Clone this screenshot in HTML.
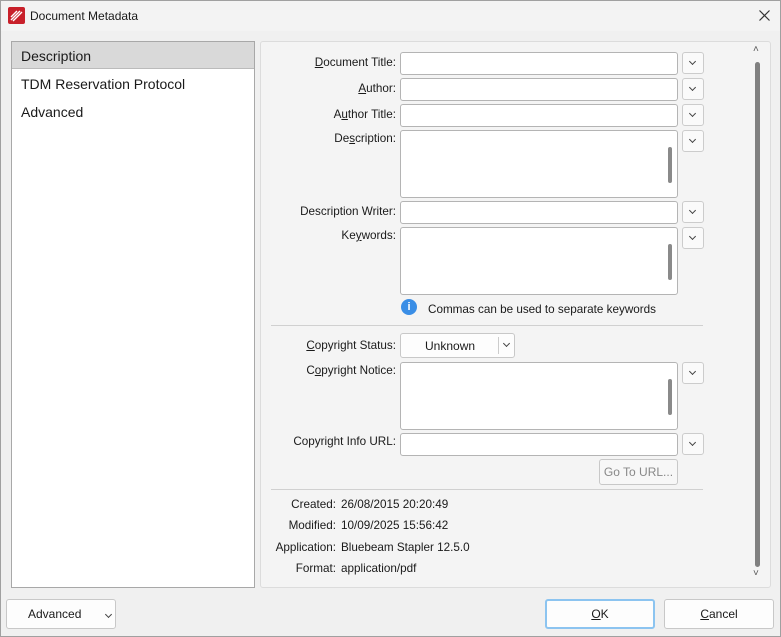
<!DOCTYPE html>
<html><head><style>
*{margin:0;padding:0;box-sizing:border-box}
body{width:781px;height:637px;background:#f0f0f0;font-family:"Liberation Sans",sans-serif;font-size:11.7px;color:#1a1a1a;position:relative;overflow:hidden;box-shadow:inset 0 0 0 1px #a0a0a0}
.a{position:absolute}
.in{position:absolute;background:#fff;border:1px solid #b4b4b4;border-radius:3px;left:400px;width:278px}
.dd{position:absolute;left:682px;width:22px;height:22px;background:#fafafa;border:1px solid #ccc;border-radius:3px}
.dd:after,.chev:after{content:"";position:absolute;left:7px;top:6px;width:4px;height:4px;border-right:1.5px solid #444;border-bottom:1.5px solid #444;transform:rotate(45deg)}
.lb{position:absolute;right:385px;text-align:right;white-space:nowrap}
.sb{position:absolute;right:5px;width:4px;background:#8a8a8a;border-radius:2px}
.btn{position:absolute;background:#fdfdfd;border:1px solid #c8c8c8;border-radius:3px;text-align:center;font-size:12px}
u{text-decoration:underline}
</style></head><body>
<div class="a" style="left:1px;top:1px;width:779px;height:30px;background:#f3f3f3"></div>
<svg class="a" style="left:8px;top:7px" width="17" height="17"><rect width="17" height="17" rx="2" fill="#c8202a"/><path d="M3 13 L12 4 M5 14 L14 5 M3 10 L9 4" stroke="#fff" stroke-width="1.4"/></svg>
<div class="a" style="left:30px;top:9px;font-size:12px">Document Metadata</div>
<svg class="a" style="left:759px;top:10px" width="11" height="11"><path d="M0.5 0.5L10.5 10.5M10.5 0.5L0.5 10.5" stroke="#333" stroke-width="1.2"/></svg>

<div class="a" style="left:11px;top:41px;width:244px;height:547px;background:#fff;border:1px solid #a8a8a8"></div>
<div class="a" style="left:12px;top:42px;width:242px;height:27px;background:#d9d9d9;border-bottom:1px solid #bbb"></div>
<div class="a" style="left:21px;top:48px;font-size:14px">Description</div>
<div class="a" style="left:21px;top:76px;font-size:14px">TDM Reservation Protocol</div>
<div class="a" style="left:21px;top:104px;font-size:14px">Advanced</div>

<div class="a" style="left:260px;top:41px;width:511px;height:547px;background:#f4f4f4;border:1px solid #dcdcdc;border-radius:3px"></div>
<div class="a" style="left:753px;top:44px;font-size:10px;color:#555">˄</div>
<div class="a" style="left:755px;top:62px;width:5px;height:505px;background:#808080;border-radius:3px"></div>
<div class="a" style="left:753px;top:568px;font-size:10px;color:#555">˅</div>

<div class="lb" style="top:56px"><u>D</u>ocument Title:</div>
<div class="in" style="top:52px;height:23px"></div><div class="dd" style="top:52px"></div>
<div class="lb" style="top:82px"><u>A</u>uthor:</div>
<div class="in" style="top:78px;height:23px"></div><div class="dd" style="top:78px"></div>
<div class="lb" style="top:108px">A<u>u</u>thor Title:</div>
<div class="in" style="top:104px;height:23px"></div><div class="dd" style="top:104px"></div>
<div class="lb" style="top:132px">De<u>s</u>cription:</div>
<div class="in" style="top:130px;height:68px"><div class="sb" style="top:16px;height:36px"></div></div><div class="dd" style="top:130px"></div>
<div class="lb" style="top:205px">Description Writer:</div>
<div class="in" style="top:201px;height:23px"></div><div class="dd" style="top:201px"></div>
<div class="lb" style="top:229px">Ke<u>y</u>words:</div>
<div class="in" style="top:227px;height:68px"><div class="sb" style="top:16px;height:36px"></div></div><div class="dd" style="top:227px"></div>
<div class="a" style="left:401px;top:299px;width:16px;height:16px;border-radius:50%;background:#3a8ee6;color:#fff;font-weight:bold;font-size:11px;text-align:center;line-height:16px">i</div>
<div class="a" style="left:428px;top:303px">Commas can be used to separate keywords</div>
<div class="a" style="left:271px;top:325px;width:432px;height:1px;background:#d0d0d0"></div>

<div class="lb" style="top:339px"><u>C</u>opyright Status:</div>
<div class="btn" style="left:400px;top:333px;width:115px;height:25px"><span class="a" style="left:24px;top:5px">Unknown</span><span class="a" style="left:97px;top:3px;width:1px;height:17px;background:#ccc"></span><span class="chev a" style="left:96px;top:1px;width:16px;height:16px"></span></div>
<div class="lb" style="top:364px">C<u>o</u>pyright Notice:</div>
<div class="in" style="top:362px;height:68px"><div class="sb" style="top:16px;height:36px"></div></div><div class="dd" style="top:362px"></div>
<div class="lb" style="top:435px">Copyright Info URL:</div>
<div class="in" style="top:433px;height:23px"></div><div class="dd" style="top:433px"></div>
<div class="btn" style="left:599px;top:459px;width:79px;height:26px;color:#888;line-height:24px;background:#f7f7f7">Go To URL...</div>
<div class="a" style="left:271px;top:489px;width:432px;height:1px;background:#d0d0d0"></div>

<div class="a" style="right:445px;top:498px">Created:</div><div class="a" style="left:341px;top:498px">26/08/2015 20:20:49</div>
<div class="a" style="right:445px;top:519px">Modified:</div><div class="a" style="left:341px;top:519px">10/09/2025 15:56:42</div>
<div class="a" style="right:445px;top:541px">Application:</div><div class="a" style="left:341px;top:541px">Bluebeam Stapler 12.5.0</div>
<div class="a" style="right:445px;top:562px">Format:</div><div class="a" style="left:341px;top:562px">application/pdf</div>

<div class="btn" style="left:6px;top:599px;width:110px;height:30px;line-height:28px;text-align:left;padding-left:21px">Advanced<span class="chev a" style="left:92px;top:6px;width:16px;height:16px"></span></div>
<div class="btn" style="left:545px;top:599px;width:110px;height:30px;line-height:27px;border:2px solid #8cc4f0"><u>O</u>K</div>
<div class="btn" style="left:664px;top:599px;width:110px;height:30px;line-height:28px"><u>C</u>ancel</div>
</body></html>
